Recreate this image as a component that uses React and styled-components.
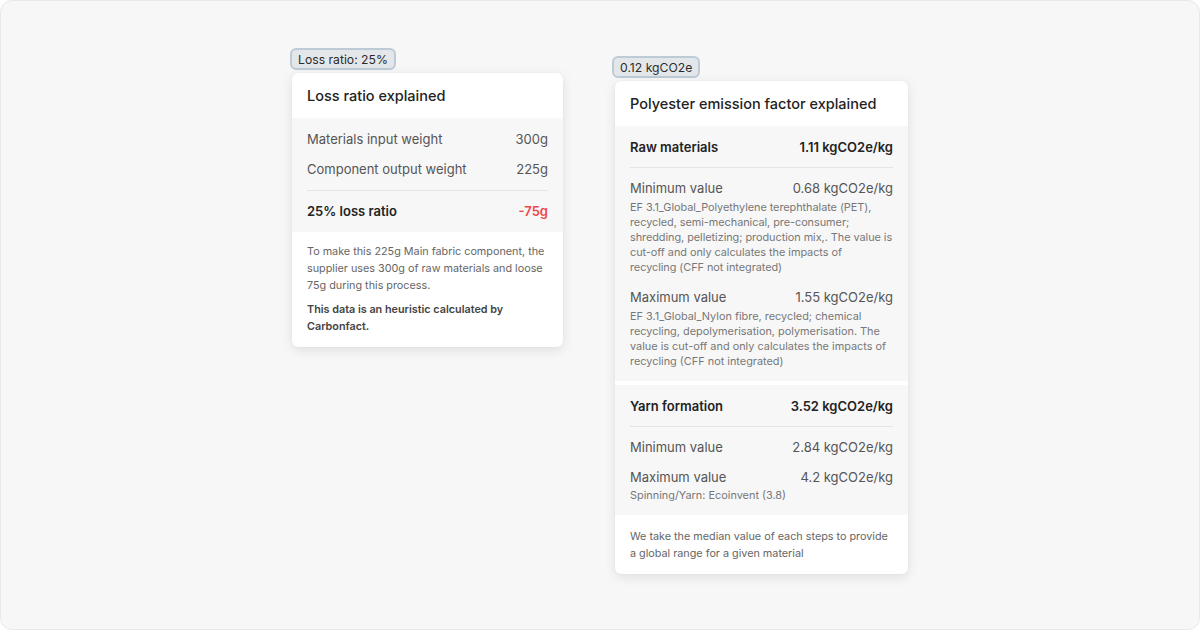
import React from "react";
import styled, { createGlobalStyle } from "styled-components";

const GlobalStyle = createGlobalStyle`
  html, body {
    margin: 0;
    padding: 0;
    background: #ffffff;
  }
  body {
    font-family: "Inter", "Noto Sans", sans-serif;
    -webkit-font-smoothing: antialiased;
  }
`;

const Frame = styled.div`
  box-sizing: border-box;
  width: 1200px;
  height: 630px;
  background: #f7f7f7;
  border: 1px solid #e9e9e9;
  border-radius: 12px;
  display: flex;
  align-items: flex-start;
  gap: 49px;
  padding-left: 289px;
  padding-top: 47px;
`;

const Column = styled.div`
  display: flex;
  flex-direction: column;
  align-items: flex-start;
  gap: 3px;
  margin-top: ${(p) => p.$offset || 0}px;
`;

const Badge = styled.div`
  box-sizing: border-box;
  height: 22px;
  padding: 0 6px;
  display: flex;
  align-items: center;
  background: #e4e7ea;
  border: 2px solid #bccbd6;
  border-radius: 6px;
  font-size: 12.2px;
  color: #2b2b2b;
`;

const Card = styled.div`
  width: ${(p) => p.$width}px;
  margin-left: ${(p) => p.$shift || 0}px;
  background: #ffffff;
  border-radius: 6px;
  box-shadow: 0 3px 12px rgba(0, 0, 0, 0.1), 0 0 1px rgba(0, 0, 0, 0.08);
  overflow: hidden;
`;

const Title = styled.div`
  height: ${(p) => p.$h}px;
  padding: 0 15px;
  display: flex;
  align-items: center;
  font-size: 14.5px;
  font-weight: 500;
  color: #222222;
`;

const Section = styled.div`
  background: #f7f7f8;
  padding: ${(p) => p.$pad || "0 15px"};
  & + & {
    margin-top: 4px;
  }
`;

const Row = styled.div`
  display: flex;
  justify-content: space-between;
  align-items: center;
  height: ${(p) => p.$h || 30}px;
  font-size: 13px;
  font-weight: ${(p) => (p.$bold ? 600 : 400)};
  color: ${(p) => (p.$bold ? "#222222" : "#555555")};
`;

const Value = styled.span`
  color: ${(p) => p.$color || "inherit"};
`;

const Divider = styled.div`
  height: 1px;
  background: #e4e4e6;
  margin: ${(p) => p.$m || "0"};
`;

const Note = styled.div`
  font-size: 10.9px;
  line-height: 15px;
  color: #777777;
  white-space: ${(p) => (p.$nowrap ? "nowrap" : "normal")};
  letter-spacing: ${(p) => (p.$nowrap ? "-0.05px" : "normal")};
  margin-top: ${(p) => p.$mt ?? -3}px;
  padding-bottom: ${(p) => p.$pb || 0}px;
`;

const Footer = styled.div`
  padding: ${(p) => p.$pad};
  font-size: 10.8px;
  line-height: 17px;
  color: #666666;
`;

const FooterPara = styled.p`
  margin: 0;
  & + & {
    margin-top: 7px;
  }
  font-weight: ${(p) => (p.$bold ? 600 : 400)};
  color: ${(p) => (p.$bold ? "#444444" : "#666666")};
`;

export default function App() {
  return (
    <>
      <GlobalStyle />
      <Frame>
        <Column>
          <Badge>Loss ratio: 25%</Badge>
          <Card $width={271} $shift={2}>
            <Title $h={45}>Loss ratio explained</Title>
            <Section $pad="6px 15px 6px">
              <Row>
                <span>Materials input weight</span>
                <Value>300g</Value>
              </Row>
              <Row>
                <span>Component output weight</span>
                <Value>225g</Value>
              </Row>
              <Divider $m="6px 0 5px" />
              <Row $bold>
                <span>25% loss ratio</span>
                <Value $color="#f0464b">-75g</Value>
              </Row>
            </Section>
            <Footer $pad="11px 15px 12px">
              <FooterPara>
                To make this 225g Main fabric component, the supplier uses 300g
                of raw materials and loose 75g during this process.
              </FooterPara>
              <FooterPara $bold>
                This data is an heuristic calculated by Carbonfact.
              </FooterPara>
            </Footer>
          </Card>
        </Column>
        <Column $offset={8}>
          <Badge>0.12 kgCO2e</Badge>
          <Card $width={293} $shift={3}>
            <Title $h={45}>Polyester emission factor explained</Title>
            <Section $pad="6px 15px 12px">
              <Row $bold>
                <span>Raw materials</span>
                <Value>1.11 kgCO2e/kg</Value>
              </Row>
              <Divider $m="5px 0 5px" />
              <Row>
                <span>Minimum value</span>
                <Value>0.68 kgCO2e/kg</Value>
              </Row>
              <Note $pb={7} $nowrap>
                EF 3.1_Global_Polyethylene terephthalate (PET),
                <br />
                recycled, semi-mechanical, pre-consumer;
                <br />
                shredding, pelletizing; production mix,. The value is
                <br />
                cut-off and only calculates the impacts of
                <br />
                recycling (CFF not integrated)
              </Note>
              <Row>
                <span>Maximum value</span>
                <Value>1.55 kgCO2e/kg</Value>
              </Row>
              <Note>
                EF 3.1_Global_Nylon fibre, recycled; chemical recycling,
                depolymerisation, polymerisation. The value is cut-off and only
                calculates the impacts of recycling (CFF not integrated)
              </Note>
            </Section>
            <Section $pad="6px 15px 12px">
              <Row $bold>
                <span>Yarn formation</span>
                <Value>3.52 kgCO2e/kg</Value>
              </Row>
              <Divider $m="5px 0 5px" />
              <Row>
                <span>Minimum value</span>
                <Value>2.84 kgCO2e/kg</Value>
              </Row>
              <Row>
                <span>Maximum value</span>
                <Value>4.2 kgCO2e/kg</Value>
              </Row>
              <Note $mt={-4}>Spinning/Yarn: Ecoinvent (3.8)</Note>
            </Section>
            <Footer $pad="13px 15px 12px">
              <FooterPara>
                We take the median value of each steps to provide a global range
                for a given material
              </FooterPara>
            </Footer>
          </Card>
        </Column>
      </Frame>
    </>
  );
}
